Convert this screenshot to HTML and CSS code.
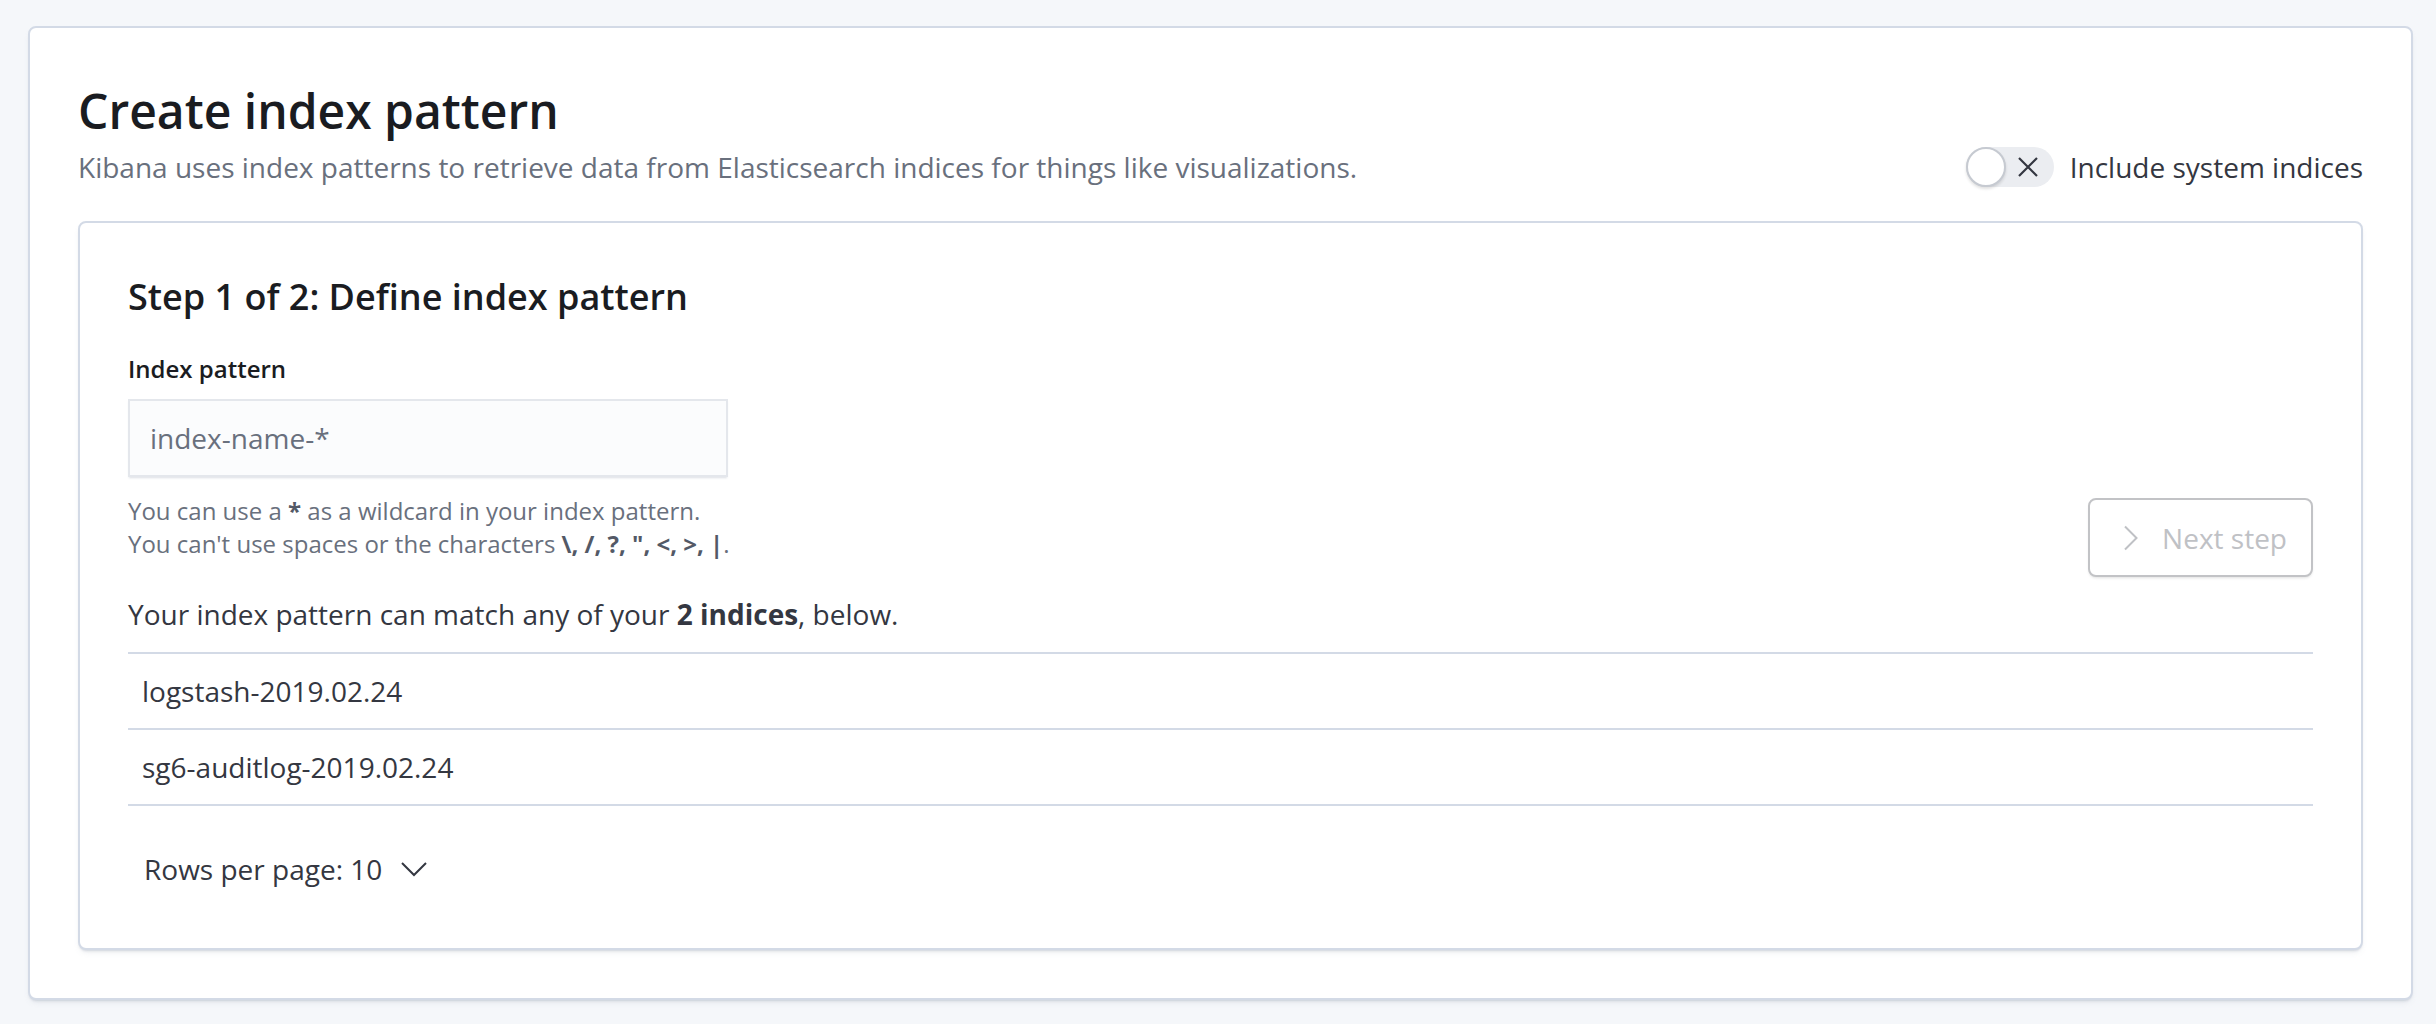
FILE: index.html
```html
<!DOCTYPE html>
<html lang="en">
<head>
<meta charset="utf-8">
<title>Create index pattern</title>
<link rel="stylesheet" href="styles.css">
</head>
<body>
<div class="page">
  <main class="page-content">
    <header class="header">
      <h1 class="title">Create index pattern</h1>
      <div class="header-row">
        <p class="subtitle">Kibana uses index patterns to retrieve data from Elasticsearch indices for things like visualizations.</p>
        <label class="switch">
          <span class="switch-track">
            <span class="switch-knob"></span>
            <svg class="switch-icon" width="20" height="20" viewBox="0 0 20 20" aria-hidden="true"><path d="M1 1L19 19M19 1L1 19"/></svg>
          </span>
          <span class="switch-label">Include system indices</span>
        </label>
      </div>
    </header>

    <section class="panel">
      <h2 class="step-title">Step 1 of 2: Define index pattern</h2>
      <div class="define-row">
        <div class="form-col">
          <label class="form-label" for="pattern">Index pattern</label>
          <input class="field" id="pattern" type="text" placeholder="index-name-*">
          <div class="help">
            <p>You can use a <strong>*</strong> as a wildcard in your index pattern.</p>
            <p>You can't use spaces or the characters <strong>\, /, ?, ", &lt;, &gt;, |</strong>.</p>
          </div>
        </div>
        <button class="next-btn" type="button" disabled>
          <svg class="icon" width="32" height="32" viewBox="0 0 16 16" aria-hidden="true"><path d="M5.5 2.25L11.25 8L5.5 13.75"/></svg>
          <span>Next step</span>
        </button>
      </div>

      <p class="match-text">Your index pattern can match any of your <strong>2 indices</strong>, below.</p>

      <div class="index-list">
        <div class="index-row">logstash-2019.02.24</div>
        <div class="index-row">sg6-auditlog-2019.02.24</div>
      </div>

      <div class="pagination">
        <button class="rows-btn" type="button">
          <span>Rows per page: 10</span>
          <svg class="icon" width="32" height="32" viewBox="0 0 16 16" aria-hidden="true"><path d="M2 5L8 11L14 5"/></svg>
        </button>
      </div>
    </section>
  </main>
</div>
</body>
</html>
```

FILE: styles.css
```css
* {
  box-sizing: border-box;
}

html,
body {
  margin: 0;
  padding: 0;
}

body {
  background: #F5F7FA;
  font-family: "Open Sans", "Noto Sans", "DejaVu Sans", sans-serif;
  color: #343741;
  font-size: 28px;
  line-height: 42px;
}

.page {
  padding: 26px 23px 20px 28px;
}

.page-content {
  background: #FFFFFF;
  border: 2px solid #D3DAE6;
  border-radius: 8px;
  padding: 48px;
  box-shadow: 0 2px 2px -1px rgba(152, 162, 179, 0.3), 0 4px 6px -3px rgba(152, 162, 179, 0.3);
}

/* Header */
.header {
  margin-bottom: 33px;
}

.title {
  margin: 0;
  font-size: 48px;
  line-height: 70px;
  font-weight: 600;
  color: #1A1C21;
}

.header-row {
  display: flex;
  align-items: center;
  justify-content: space-between;
}

.subtitle {
  margin: 0;
  font-size: 28px;
  line-height: 42px;
  color: #69707D;
}

.switch {
  display: flex;
  align-items: center;
  gap: 16px;
}

.switch-track {
  display: flex;
  align-items: center;
  width: 88px;
  height: 40px;
  border-radius: 20px;
  background: #EBEDF1;
}

.switch-knob {
  width: 40px;
  height: 40px;
  border-radius: 50%;
  background: #FFFFFF;
  border: 2px solid #C6CAD1;
  box-shadow: 0 2px 3px rgba(0, 0, 0, 0.12);
}

.switch-icon {
  margin-left: 12px;
  fill: none;
  stroke: #343741;
  stroke-width: 2.2;
}

.switch-label {
  font-size: 28px;
  line-height: 42px;
  color: #343741;
}

/* Step panel */
.panel {
  border: 2px solid #D3DAE6;
  border-radius: 8px;
  padding: 48px;
  background: #FFFFFF;
  box-shadow: 0 2px 2px -1px rgba(152, 162, 179, 0.3), 0 4px 6px -3px rgba(152, 162, 179, 0.3);
}

.step-title {
  margin: 0;
  font-size: 36px;
  line-height: 52px;
  font-weight: 600;
  color: #1A1C21;
}

.define-row {
  display: flex;
  justify-content: space-between;
  align-items: flex-end;
  margin-top: 28px;
}

.form-col {
  width: 600px;
  padding-bottom: 17px;
}

.form-label {
  display: block;
  font-size: 24px;
  line-height: 36px;
  font-weight: 600;
  color: #1A1C21;
}

.field {
  display: block;
  margin-top: 12px;
  width: 600px;
  height: 78px;
  padding: 0 20px;
  border: 2px solid #E4E7EC;
  border-radius: 0;
  background: #FBFCFD;
  box-shadow: 0 2px 2px -1px rgba(152, 162, 179, 0.35);
  font-family: inherit;
  font-size: 28px;
  line-height: 42px;
  color: #343741;
  outline: none;
}

.field::placeholder {
  color: #69707D;
  opacity: 1;
}

.help {
  margin-top: 17px;
  font-size: 24px;
  line-height: 33px;
  color: #69707D;
}

.help p {
  margin: 0;
  white-space: nowrap;
}

.help strong {
  font-weight: 700;
  color: #535966;
}

.next-btn {
  display: flex;
  align-items: center;
  gap: 16px;
  height: 79px;
  padding: 0 24px;
  border: 2px solid #C2C3C6;
  border-radius: 8px;
  background: #FFFFFF;
  box-shadow: 0 2px 3px -1px rgba(0, 0, 0, 0.12);
  font-family: inherit;
  font-size: 28px;
  line-height: 42px;
  color: #BFC1C5;
  cursor: default;
}

.icon {
  display: block;
  flex: none;
  fill: none;
  stroke: currentColor;
  stroke-width: 1;
}

.match-text {
  margin: 16px 0 0;
  font-size: 28px;
  line-height: 42px;
  color: #343741;
}

.match-text strong {
  font-weight: 700;
}

/* Index table */
.index-list {
  margin-top: 17px;
  border-top: 2px solid #D3DAE6;
}

.index-row {
  display: flex;
  align-items: center;
  height: 76px;
  padding: 0 14px;
  border-bottom: 2px solid #D3DAE6;
  font-size: 28px;
  line-height: 42px;
  color: #343741;
}

/* Pagination */
.pagination {
  display: flex;
  align-items: center;
  height: 62px;
  margin-top: 32px;
}

.rows-btn {
  display: flex;
  align-items: center;
  gap: 16px;
  height: 48px;
  padding: 0 16px;
  border: 0;
  background: transparent;
  font-family: inherit;
  font-size: 28px;
  line-height: 42px;
  color: #343741;
}
```
